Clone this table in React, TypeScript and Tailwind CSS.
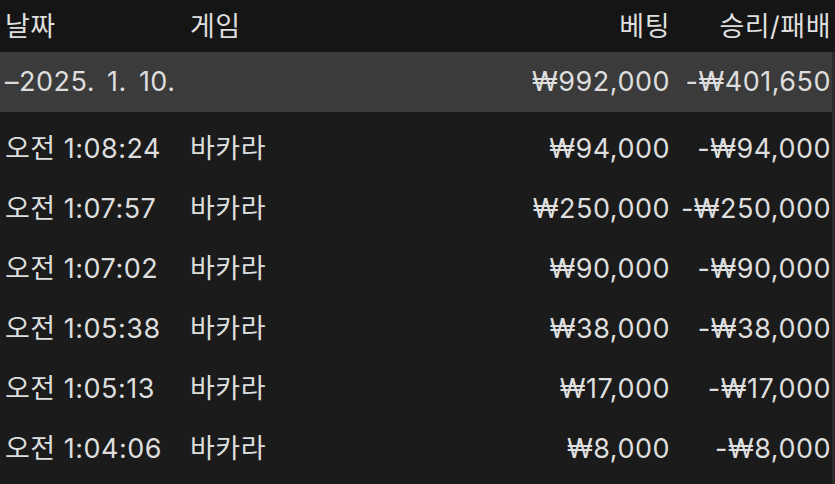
import React from "react";

const rows = [
  { t: "오전 1:08:24", g: "바카라", b: "₩94,000", w: "-₩94,000" },
  { t: "오전 1:07:57", g: "바카라", b: "₩250,000", w: "-₩250,000" },
  { t: "오전 1:07:02", g: "바카라", b: "₩90,000", w: "-₩90,000" },
  { t: "오전 1:05:38", g: "바카라", b: "₩38,000", w: "-₩38,000" },
  { t: "오전 1:05:13", g: "바카라", b: "₩17,000", w: "-₩17,000" },
  { t: "오전 1:04:06", g: "바카라", b: "₩8,000", w: "-₩8,000" },
];

export default function App() {
  return (
    <div
      className="w-[835px] h-[484px] overflow-hidden bg-[#1b1b1b] text-[#dedede] text-[27px] tracking-[0.5px] relative"
      style={{ fontFamily: '"Inter", "Noto Sans CJK KR", sans-serif' }}
    >
      <div className="flex items-center h-[52px] bg-[#151515] pt-[2px]">
        <div className="w-[190px] pl-[5px]">날짜</div>
        <div className="flex-1">게임</div>
        <div className="w-[200px] text-right">베팅</div>
        <div className="w-[165px] text-right pr-[4px]">승리/패배</div>
      </div>
      <div className="flex items-center h-[60px] bg-[#3b3b3b]">
        <div className="w-[190px] pl-[5px] [word-spacing:4px]">–2025. 1. 10.</div>
        <div className="flex-1"></div>
        <div className="w-[200px] text-right">₩992,000</div>
        <div className="w-[165px] text-right pr-[4px]">-₩401,650</div>
      </div>
      <div className="mt-[7px]">
        {rows.map((r, i) => (
          <div key={i} className="flex items-center h-[60px]">
            <div className="w-[190px] pl-[5px]">{r.t}</div>
            <div className="flex-1">{r.g}</div>
            <div className="w-[200px] text-right">{r.b}</div>
            <div className="w-[165px] text-right pr-[4px]">{r.w}</div>
          </div>
        ))}
      </div>
      <div className="absolute right-0 top-[52px] bottom-0 w-[3px] bg-[#2a2a2a]" />
    </div>
  );
}
